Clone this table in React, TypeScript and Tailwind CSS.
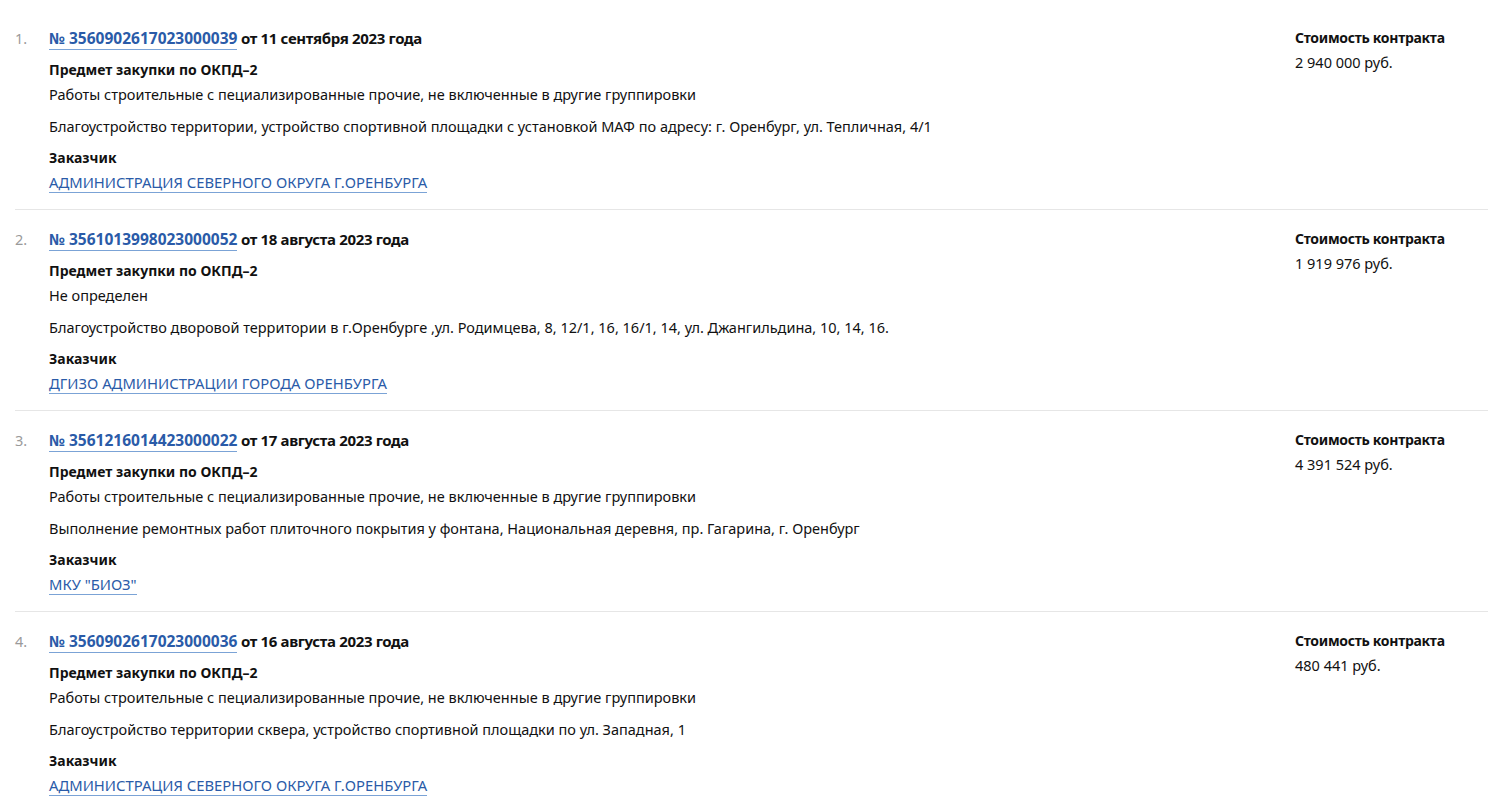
import React from 'react';

interface Purchase {
  number: string;
  date: string;
  okpd: string;
  subject: string;
  customer: string;
  price: string;
}

const purchases: Purchase[] = [
  {
    number: '3560902617023000039',
    date: '11 сентября 2023 года',
    okpd: 'Работы строительные с пециализированные прочие, не включенные в другие группировки',
    subject: 'Благоустройство территории, устройство спортивной площадки с установкой МАФ по адресу: г. Оренбург, ул. Тепличная, 4/1',
    customer: 'АДМИНИСТРАЦИЯ СЕВЕРНОГО ОКРУГА Г.ОРЕНБУРГА',
    price: '2 940 000 руб.',
  },
  {
    number: '3561013998023000052',
    date: '18 августа 2023 года',
    okpd: 'Не определен',
    subject: 'Благоустройство дворовой территории в г.Оренбурге ,ул. Родимцева, 8, 12/1, 16, 16/1, 14, ул. Джангильдина, 10, 14, 16.',
    customer: 'ДГИЗО АДМИНИСТРАЦИИ ГОРОДА ОРЕНБУРГА',
    price: '1 919 976 руб.',
  },
  {
    number: '3561216014423000022',
    date: '17 августа 2023 года',
    okpd: 'Работы строительные с пециализированные прочие, не включенные в другие группировки',
    subject: 'Выполнение ремонтных работ плиточного покрытия у фонтана, Национальная деревня, пр. Гагарина, г. Оренбург',
    customer: 'МКУ "БИОЗ"',
    price: '4 391 524 руб.',
  },
  {
    number: '3560902617023000036',
    date: '16 августа 2023 года',
    okpd: 'Работы строительные с пециализированные прочие, не включенные в другие группировки',
    subject: 'Благоустройство территории сквера, устройство спортивной площадки по ул. Западная, 1',
    customer: 'АДМИНИСТРАЦИЯ СЕВЕРНОГО ОКРУГА Г.ОРЕНБУРГА',
    price: '480 441 руб.',
  },
];

const PurchaseItem = ({ item, index }: { item: Purchase; index: number }) => (
  <li className="flex border-b border-[#e6e6e6] pt-[17px] pb-[15px] last:border-b-0">
    <div className="w-[34px] shrink-0 text-[#9a9a9a]">{index + 1}.</div>
    <div className="flex-1">
      <div className="font-bold text-[15px] tracking-[-0.35px]">
        <a href="#" className="text-[15.5px] tracking-[0px] text-[#2a5ba8] border-b border-[#7ba3d6]">
          № {item.number}
        </a>{' '}
        от {item.date}
      </div>
      <div className="mt-2 font-bold text-[14px]">Предмет закупки по ОКПД–2</div>
      <div>{item.okpd}</div>
      <div className="mt-2">{item.subject}</div>
      <div className="mt-2 font-bold text-[14px]">Заказчик</div>
      <div>
        <a href="#" className="text-[14.8px] text-[#2a5ba8] border-b border-[#7ba3d6]">
          {item.customer}
        </a>
      </div>
    </div>
    <div className="w-[193px] shrink-0">
      <div className="font-bold text-[14px] tracking-[-0.3px]">Стоимость контракта</div>
      <div>{item.price}</div>
    </div>
  </li>
);

export default function App() {
  return (
    <div
      className="min-h-screen bg-white text-[14.5px] leading-[24px] text-[#111] pl-[15px] pt-[9px]"
      style={{ fontFamily: '"Noto Sans", "DejaVu Sans", sans-serif' }}
    >
      <ol>
        {purchases.map((item, index) => (
          <PurchaseItem key={item.number} item={item} index={index} />
        ))}
      </ol>
    </div>
  );
}
